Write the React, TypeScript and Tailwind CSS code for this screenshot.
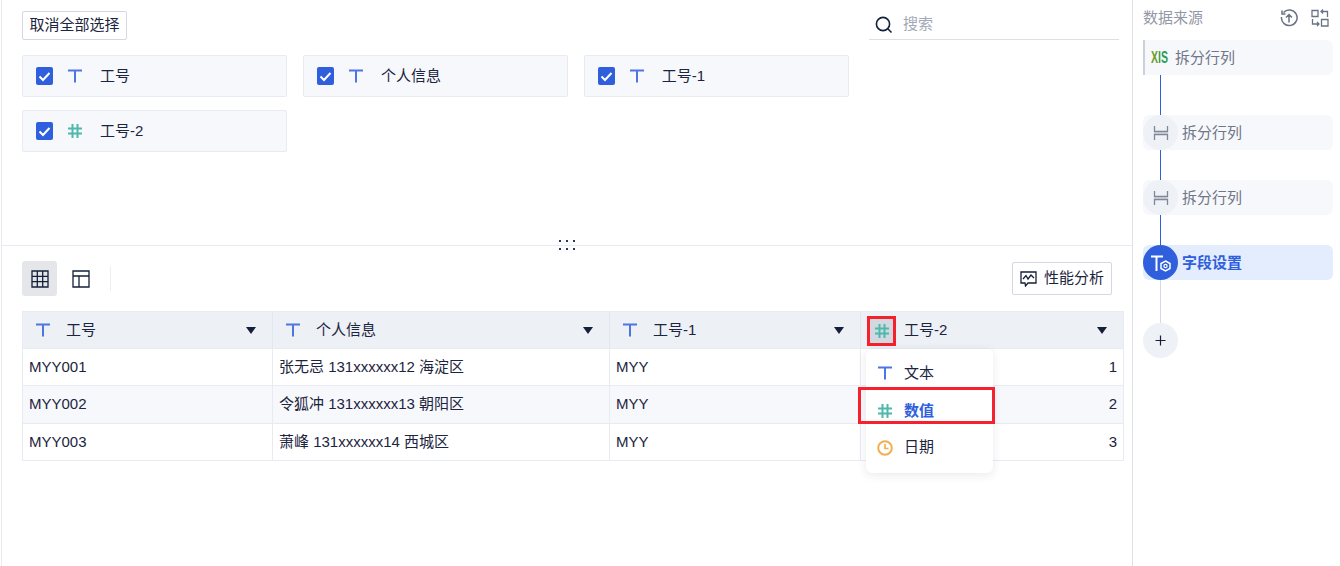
const font = { fontFamily: '"Liberation Sans", "Noto Sans CJK SC", sans-serif' };

function TIcon({ className = "text-[#4f74e3]" }: { className?: string }) {
  return (
    <svg width="16" height="16" viewBox="0 0 16 16" className={className}>
      <path d="M1 2.5H15M8 2.5V14.5" stroke="currentColor" strokeWidth="2" fill="none" />
    </svg>
  );
}
function HashIcon() {
  return (
    <svg width="16" height="16" viewBox="0 0 16 16" className="text-[#4fb8ac]">
      <path d="M1 5.5H15M1 10.5H15M5.5 1V15M10.5 1V15" stroke="currentColor" strokeWidth="2" fill="none" />
    </svg>
  );
}
function Split() {
  return (
    <svg width="16" height="16" viewBox="0 0 16 16" className="text-[#7f8798]">
      <path d="M1.5 1V6.5H14.5V1M1.5 15V9.5H14.5V15" stroke="currentColor" strokeWidth="1.3" fill="none" />
      <path d="M1.5 8H14.5" stroke="currentColor" strokeWidth="1" strokeDasharray="2 1" fill="none" opacity="0.6" />
    </svg>
  );
}
function Card({ label, hash }: { label: string; hash?: boolean }) {
  return (
    <div className="w-[265.4px] h-[42px] flex items-center pl-[13px] bg-[#f7f8fc] border border-[#e8ebf2] rounded-[2px]">
      <span className="w-[17px] h-[18px] bg-[#2f5fdc] rounded-[2px] flex items-center justify-center">
        <svg width="13" height="11" viewBox="0 0 13 11"><path d="M1.5 5.5L5 9L11.5 2" stroke="white" strokeWidth="2" fill="none" /></svg>
      </span>
      <span className="ml-[14px] w-[16px] flex">{hash ? <HashIcon /> : <TIcon />}</span>
      <span className="ml-[17px] text-[15px] leading-[20px] -mt-[1px] text-[#1c2540]">{label}</span>
    </div>
  );
}
function Th({ w, label, hash }: { w: string; label: string; hash?: boolean }) {
  return (
    <div className={`${w} flex items-center pl-[12px] pr-[16px] border-r border-[#e2e6ef] last:border-r-0`}>
      <span className="w-[16px] flex">{hash ? <HashIcon /> : <TIcon />}</span>
      <span className="ml-[15px] text-[15px] leading-[20px] -mt-[1px] text-[#1c2540] flex-1">{label}</span>
      <svg width="10" height="7" viewBox="0 0 10 7"><path d="M0 0H10L5 7Z" fill="#14203a" /></svg>
    </div>
  );
}
const rows = [
  ["MYY001", "张无忌 131xxxxxx12 海淀区", "MYY", "1", "h-[37px]"],
  ["MYY002", "令狐冲 131xxxxxx13 朝阳区", "MYY", "2", "h-[38px]"],
  ["MYY003", "萧峰 131xxxxxx14 西城区", "MYY", "3", "h-[37px]"],
];
function Node({ active }: { active?: boolean }) {
  return (
    <div className={`relative h-[35px] w-[190px] rounded-[6px] flex items-center ${active ? "bg-[#e4edfd]" : "bg-[#f7f8fc]"}`}>
      <span className={`w-[35px] h-[35px] rounded-full flex items-center justify-center ${active ? "bg-[#2f5fdc]" : "bg-[#eef1f5]"}`}>
        {active ? (
          <svg width="22" height="18" viewBox="0 0 22 18">
            <path d="M1 2.5H13M6.5 2.5V17" stroke="white" strokeWidth="2" fill="none" />
            <path d="M15.5 7L20 9.5V14.5L15.5 17L11 14.5V9.5Z" stroke="white" strokeWidth="1.5" fill="none" />
            <circle cx="15.5" cy="12" r="1.6" stroke="white" strokeWidth="1.2" fill="none" />
          </svg>
        ) : <Split />}
      </span>
      <span className={`ml-[4px] mt-[1px] text-[15px] ${active ? "text-[#2f5fdc] font-bold" : "text-[#6f7686]"}`}>{active ? "字段设置" : "拆分行列"}</span>
    </div>
  );
}

export default function App() {
  return (
    <div style={font} className="w-[1340px] h-[566px] flex overflow-hidden bg-white">
      <div className="w-[1132px] h-full ml-[1px] flex flex-col border-l border-r border-[#e8ebf2] border-r-[#dfe2ea]">
        <div className="h-[246px] shrink-0 relative border-b border-[#e8ebf2] pl-[20px] pr-[13px] pt-[11px]">
          <div className="flex justify-between items-start h-[29px]">
            <div className="h-[29px] w-[105px] flex items-center justify-center bg-white border border-[#d5d8e2] rounded-[2px] text-[15px] text-[#1c2540]">取消全部选择</div>
            <div className="w-[250px] h-[29px] flex items-center border-b border-[#dcdfe4] pl-[6px]">
              <svg width="18" height="18" viewBox="0 0 18 18" className="text-[#14203a]">
                <circle cx="8" cy="8" r="6.6" stroke="currentColor" strokeWidth="1.6" fill="none" />
                <path d="M12.8 12.8L16.5 16.5" stroke="currentColor" strokeWidth="1.6" />
              </svg>
              <span className="ml-[10px] -mt-[2px] text-[15px] text-[#a3a9b6]">搜索</span>
            </div>
          </div>
          <div className="mt-[15px] flex flex-wrap gap-x-[15.5px] gap-y-[13px] w-[1100px]">
            <Card label="工号" />
            <Card label="个人信息" />
            <Card label="工号-1" />
            <Card label="工号-2" hash />
          </div>
          <div className="absolute left-[557px] top-[240px] grid grid-cols-3 gap-x-[5px] gap-y-[6px]">
            {[0, 1, 2, 3, 4, 5].map((i) => <span key={i} className="w-[2px] h-[2px] bg-[#2a3a5c]" />)}
          </div>
        </div>
        <div className="pl-[20px] pr-[8px] pt-[15px] flex-1">
          <div className="flex items-center h-[35px]">
            <span className="w-[35px] h-[35px] bg-[#e4e6ea] rounded-[3px] flex items-center justify-center">
              <svg width="18" height="18" viewBox="0 0 18 18"><path d="M1 1H17V17H1ZM1 6.3H17M1 11.7H17M6.3 1V17M11.7 1V17" stroke="#14203a" strokeWidth="1.3" fill="none" /></svg>
            </span>
            <span className="w-[35px] h-[35px] ml-[6px] flex items-center justify-center">
              <svg width="18" height="18" viewBox="0 0 18 18"><path d="M1 1H17V17H1ZM1 6H17M7 6V17" stroke="#14203a" strokeWidth="1.3" fill="none" /></svg>
            </span>
            <span className="ml-[12px] w-px h-[25px] bg-[#eceef2]" />
            <div className="ml-auto mr-[12px] h-[33px] w-[100px] border border-[#d5d8e2] rounded-[2px] flex items-center justify-center">
              <svg width="17" height="16" viewBox="0 0 17 16"><path d="M1 1H16V12H8L5.5 15L5 12H1ZM3 8L6 4.5L8 8L11 4L14 7" stroke="#14203a" strokeWidth="1.3" fill="none" /></svg>
              <span className="ml-[7px] text-[15px] text-[#1c2540] whitespace-nowrap">性能分析</span>
            </div>
          </div>
          <div className="relative mt-[15px] border border-[#e8ebf2]">
            <div className="flex h-[36px] bg-[#edf0f5]">
              <Th w="w-[250px]" label="工号" />
              <Th w="w-[337px]" label="个人信息" />
              <Th w="w-[251px]" label="工号-1" />
              <Th w="w-[262px]" label="工号-2" hash />
            </div>
            {rows.map((r, i) => (
              <div key={r[0]} className={`flex ${r[4]} items-center border-t border-[#e8ebf2] text-[15px] text-[#1c2540] ${i === 1 ? "bg-[#f7f8fc]" : "bg-white"}`}>
                <div className="w-[250px] h-full flex items-center pl-[6px] border-r border-[#e8ebf2]">{r[0]}</div>
                <div className="w-[337px] h-full flex items-center pl-[6px] border-r border-[#e8ebf2]">{r[1]}</div>
                <div className="w-[251px] h-full flex items-center pl-[6px] border-r border-[#e8ebf2]">{r[2]}</div>
                <div className="w-[262px] h-full flex items-center justify-end pr-[6px]">{r[3]}</div>
              </div>
            ))}
            <div className="absolute left-[844px] top-[4px] w-[29px] h-[30px] bg-[#d3d8e0] border-[3px] border-[#f5222d] flex items-center justify-center">
              <HashIcon />
            </div>
            <div className="absolute left-[843px] top-[37px] w-[127px] h-[124px] bg-white rounded-[6px] shadow-[0_2px_10px_rgba(30,40,70,0.1)] flex flex-col pt-[5px]">
              {[
                { l: "文本", ic: <TIcon />, h: "h-[38px]" },
                { l: "数值", ic: <HashIcon />, a: true, h: "h-[38px]" },
                {
                  l: "日期",
                  h: "h-[35px]",
                  ic: (
                    <svg width="16" height="16" viewBox="0 0 16 16" className="text-[#f0b04f]">
                      <circle cx="8" cy="8" r="6.8" stroke="currentColor" strokeWidth="2" fill="none" />
                      <path d="M8 4V8.5H11.5" stroke="currentColor" strokeWidth="1.7" fill="none" />
                    </svg>
                  ),
                },
              ].map((m) => (
                <div key={m.l} className={`${m.h} flex items-center pl-[11px] shrink-0`}>
                  <span className="w-[16px] flex">{m.ic}</span>
                  <span className={`ml-[11px] text-[15px] ${m.a ? "text-[#2f5fdc] font-bold" : "text-[#1c2540]"}`}>{m.l}</span>
                </div>
              ))}
            </div>
            <div className="absolute left-[835px] top-[75px] w-[137px] h-[37px] border-[3px] border-[#f5222d]" />
          </div>
        </div>
      </div>
      <div className="flex-1 pl-[10px] pt-[8px]">
        <div className="flex items-center justify-between w-[190px] h-[20px]">
          <span className="text-[15px] text-[#9298a6]">数据来源</span>
          <span className="flex items-center gap-[13px] mr-[4px] text-[#6a7384]">
            <svg width="18" height="18" viewBox="0 0 18 18"><path d="M3.5 3.5A7.8 7.8 0 1 1 1.5 8M2 1.5V5H5.5M9 13.5V6M6 8.5L9 5.5L12 8.5" stroke="currentColor" strokeWidth="1.5" fill="none" /></svg>
            <svg width="18" height="18" viewBox="0 0 18 18"><path d="M1 1.5H7V7.5H1ZM10.5 10.5H17V17H10.5ZM12 0.5L10 2.5L12 4.5M10 2.5H16.5V8M6 17L8 15L6 13M8 15H1.5V10" stroke="currentColor" strokeWidth="1.3" fill="none" /></svg>
          </span>
        </div>
        <div className="mt-[12px] flex flex-col">
          <div className="h-[35px] w-[190px] bg-[#f7f8fc] border-l-2 border-[#ccd0da] rounded-r-[6px] flex items-center pl-[6px]">
            <span className="w-[17px] inline-block text-[16px] leading-none text-[#2f9e4f] scale-x-[0.66] origin-left whitespace-nowrap font-bold">
              <span className="text-[#6f9d25]">X</span>lS
            </span>
            <span className="ml-[7px] mt-[1px] text-[15px] text-[#6f7686]">拆分行列</span>
          </div>
          <div className="ml-[17px] w-[1px] h-[40px] bg-[#2f5fdc]" />
          <Node />
          <div className="ml-[17px] w-[1px] h-[30px] bg-[#2f5fdc]" />
          <Node />
          <div className="ml-[17px] w-[1px] h-[30px] bg-[#2f5fdc]" />
          <Node active />
          <div className="ml-[17px] w-[1px] h-[43px] bg-[#d3dae4]" />
          <span className="w-[35px] h-[35px] rounded-full bg-[#eef1f5] flex items-center justify-center">
            <svg width="11" height="11" viewBox="0 0 11 11"><path d="M5.5 0.5V10.5M0.5 5.5H10.5" stroke="#14203a" strokeWidth="1.2" /></svg>
          </span>
        </div>
      </div>
    </div>
  );
}
